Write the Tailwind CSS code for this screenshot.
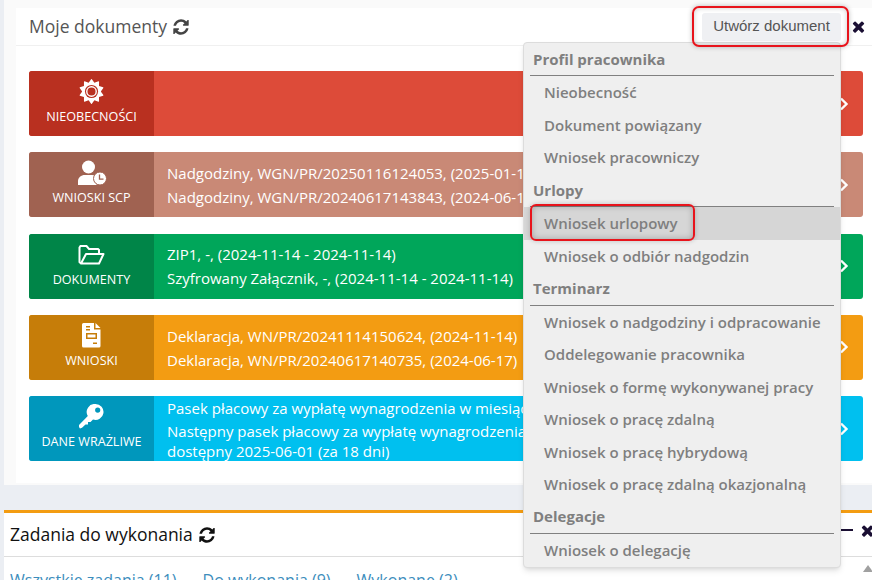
<!DOCTYPE html>
<html lang="pl">
<head>
    <meta charset="UTF-8">
    <title>Moje dokumenty</title>
    <script src="https://cdn.jsdelivr.net/npm/@tailwindcss/browser@4"></script>
</head>
<body class="relative w-[872px] h-[580px] overflow-hidden bg-[#ebeef3] font-['Open_Sans',sans-serif]">

    <!-- Moje dokumenty -->
    <div class="ml-1 h-[485px] pl-3 pt-2 bg-[#fafafa]">
        <div class="h-[475px] bg-white">
            <div class="h-[38px] flex items-center pl-[13px] pr-[5px] border-b border-[#f0f0f0]">
                <span class="text-[17.500px] text-[#555]">Moje dokumenty</span>
                <svg class="w-[18px] h-[18px] ml-[5px] text-[#444]" viewBox="0 0 1792 1792" fill="currentColor"><path d="M1639 1056q0 5-1 7-64 268-268 434.5t-478 166.5q-146 0-282.5-55t-243.5-157l-129 129q-19 19-45 19t-45-19-19-45v-448q0-26 19-45t45-19h448q26 0 45 19t19 45-19 45l-137 137q71 66 161 102t187 36q134 0 250-65t186-179q11-17 53-117 8-23 30-23h192q13 0 22.5 9.5t9.5 22.5zm25-800v448q0 26-19 45t-45 19h-448q-26 0-45-19t-19-45 19-45l138-138q-148-137-349-137-134 0-250 65t-186 179q-11 17-53 117-8 23-30 23h-199q-13 0-22.5-9.5t-9.5-22.5v-7q65-268 270-434.5t480-166.5q146 0 284 55.5t245 156.5l130-129q19-19 45-19t45 19 19 45z"/></svg>
                <button class="ml-auto mr-[9px] w-[139px] h-[28px] rounded-[3px] bg-[#eff0f3] text-[15px] text-[#555] font-['Liberation_Sans',sans-serif]">Utwórz dokument</button>
                <svg class="w-[17px] h-[17px] text-[#1a0f33]" viewBox="0 0 1792 1792" fill="currentColor"><path d="M1490 1322q0 40-28 68l-136 136q-28 28-68 28t-68-28l-294-294-294 294q-28 28-68 28t-68-28l-136-136q-28-28-28-68t28-68l294-294-294-294q-28-28-28-68t28-68l136-136q28-28 68-28t68 28l294 294 294-294q28-28 68-28t68 28l136 136q28 28 28 68t-28 68l-294 294 294 294q28 28 28 68z"/></svg>
            </div>

            <div class="pl-[13px] pr-[9px] pt-[25px] flex flex-col gap-[16.33px]">
                <!-- Nieobecności -->
                <div class="h-[65px] flex rounded-[3px] overflow-hidden bg-[#dd4b39] text-white">
                    <div class="w-[125px] shrink-0 bg-[#b93020] flex flex-col items-center pt-[8px]">
                        <svg class="w-[25px] h-[25px]" viewBox="0 0 1792 1792"><path fill="currentColor" d="M1748 1173q-4 15-20 20l-292 96v306q0 16-13 26-15 10-29 4l-292-94-180 248q-10 13-26 13t-26-13l-180-248-292 94q-14 6-29-4-13-10-13-26v-306l-292-96q-16-5-20-20-5-17 4-29l180-248-180-248q-9-13-4-29 4-15 20-20l292-96v-306q0-16 13-26 15-10 29-4l292 94 180-248q9-12 26-12t26 12l180 248 292-94q14-6 29 4 13 10 13 26v306l292 96q16 5 20 20 5 16-4 29l-180 248 180 248q9 12 4 29z"/><circle cx="896" cy="896" r="470" fill="#b93020"/><circle cx="896" cy="896" r="340" fill="none" stroke="#fff" stroke-width="100"/></svg>
                        <span class="mt-[4px] text-[12.600px] leading-[18px]">NIEOBECNOŚCI</span>
                    </div>
                    <div class="flex-1"></div>
                    <svg class="w-[10px] h-[14px] self-center mr-[14px]" viewBox="0 0 10 14" fill="none" stroke="currentColor" stroke-width="2.4"><path d="M2 1.500 7.500 7 2 12.500"/></svg>
                </div>

                <!-- Wnioski SCP -->
                <div class="h-[65px] flex rounded-[3px] overflow-hidden bg-[#c98976] text-white">
                    <div class="w-[125px] shrink-0 bg-[#a06251] flex flex-col items-center pt-[8px]">
                        <svg class="w-[30px] h-[25px] ml-[1px]" viewBox="0 0 30 25" fill="currentColor"><circle cx="11.500" cy="7" r="6.500"/><path d="M1 25v-3.500C1 17.500 4 15 8 15h7c1.500 0 2.800.3 4 1-1.200 2.500-1.200 6.500 1 9z"/><circle cx="23" cy="18.500" r="6.500" stroke="#a06251" stroke-width="1"/><path d="M22.500 14.500v4.700h4" fill="none" stroke="#a06251" stroke-width="1.300"/></svg>
                        <span class="mt-[4px] text-[12.600px] leading-[18px]">WNIOSKI SCP</span>
                    </div>
                    <div class="flex-1 min-w-0 pl-[13px] pt-[11px] text-[15px] leading-[20px] flex flex-col gap-1 whitespace-nowrap overflow-hidden">
                        <div>Nadgodziny, WGN/PR/20250116124053, (2025-01-16 - 2025-01-16)</div>
                        <div>Nadgodziny, WGN/PR/20240617143843, (2024-06-17 - 2024-06-17)</div>
                    </div>
                    <svg class="w-[10px] h-[14px] self-center mr-[14px] shrink-0" viewBox="0 0 10 14" fill="none" stroke="currentColor" stroke-width="2.4"><path d="M2 1.500 7.500 7 2 12.500"/></svg>
                </div>

                <!-- Dokumenty -->
                <div class="h-[65px] flex rounded-[3px] overflow-hidden bg-[#00a65a] text-white">
                    <div class="w-[125px] shrink-0 bg-[#008548] flex flex-col items-center pt-[8px]">
                        <svg class="w-[27px] h-[25px]" viewBox="0 0 27 25" fill="none" stroke="currentColor" stroke-width="2"><path d="M3 21.500 1.500 20V5.500l1-1.500h6l2.500 3h9l1 1v3.500"/><path d="M3 21.500 8 12h17.500l-4.500 9.500z" stroke-linejoin="round"/></svg>
                        <span class="mt-[4px] text-[12.600px] leading-[18px]">DOKUMENTY</span>
                    </div>
                    <div class="flex-1 min-w-0 pl-[13px] pt-[10px] text-[15px] leading-[20px] flex flex-col gap-1 whitespace-nowrap overflow-hidden">
                        <div>ZIP1, -, (2024-11-14 - 2024-11-14)</div>
                        <div>Szyfrowany Załącznik, -, (2024-11-14 - 2024-11-14)</div>
                    </div>
                    <svg class="w-[10px] h-[14px] self-center mr-[14px] shrink-0" viewBox="0 0 10 14" fill="none" stroke="currentColor" stroke-width="2.4"><path d="M2 1.500 7.500 7 2 12.500"/></svg>
                </div>

                <!-- Wnioski -->
                <div class="h-[65px] flex rounded-[3px] overflow-hidden bg-[#f39c12] text-white">
                    <div class="w-[125px] shrink-0 bg-[#c67d09] flex flex-col items-center pt-[8px]">
                        <svg class="w-[19px] h-[25px]" viewBox="0 0 19 25" fill="currentColor" fill-rule="evenodd"><path d="M1.500 0H12v6.500h6.500V23a1.500 1.500 0 0 1-1.500 1.500H1.500A1.500 1.500 0 0 1 0 23V1.500A1.500 1.500 0 0 1 1.500 0zM4 10v6h11v-6zm1.500 1.500h8v3h-8zM11 19.500v1.500h4v-1.500zM4 3v1.500h4V3zM4 6v1.500h4V6z"/><path d="M13.500 0v5h5z"/></svg>
                        <span class="mt-[4px] text-[12.600px] leading-[18px]">WNIOSKI</span>
                    </div>
                    <div class="flex-1 min-w-0 pl-[13px] pt-[11px] text-[15px] leading-[20px] flex flex-col gap-1 whitespace-nowrap overflow-hidden">
                        <div>Deklaracja, WN/PR/20241114150624, (2024-11-14)</div>
                        <div>Deklaracja, WN/PR/20240617140735, (2024-06-17)</div>
                    </div>
                    <svg class="w-[10px] h-[14px] self-center mr-[14px] shrink-0" viewBox="0 0 10 14" fill="none" stroke="currentColor" stroke-width="2.4"><path d="M2 1.500 7.500 7 2 12.500"/></svg>
                </div>

                <!-- Dane wrażliwe -->
                <div class="h-[65px] flex rounded-[3px] overflow-hidden bg-[#00c0ef] text-white">
                    <div class="w-[125px] shrink-0 bg-[#0097bc] flex flex-col items-center pt-[8px]">
                        <svg class="w-[25px] h-[25px]" viewBox="0 0 25 25" fill="currentColor" fill-rule="evenodd"><path d="M16.500 0a8 8 0 1 1-2.500 15.600L11.500 18H9v2.500H6.500L3 23.700 1 24.500 0 23v-2l8.800-9A8 8 0 0 1 16.500 0zm2.200 3.500a2.600 2.600 0 1 0 0 5.200 2.600 2.600 0 0 0 0-5.200z"/></svg>
                        <span class="mt-[4px] text-[12.600px] leading-[18px]">DANE WRAŻLIWE</span>
                    </div>
                    <div class="flex-1 min-w-0 pl-[13px] pt-[2px] text-[15px] leading-[20px] flex flex-col gap-[3px] whitespace-nowrap overflow-hidden">
                        <div>Pasek płacowy za wypłatę wynagrodzenia w miesiącu</div>
                        <div>Następny pasek płacowy za wypłatę wynagrodzenia<br>dostępny 2025-06-01 (za 18 dni)</div>
                    </div>
                    <svg class="w-[10px] h-[14px] self-center mr-[14px] shrink-0" viewBox="0 0 10 14" fill="none" stroke="currentColor" stroke-width="2.4"><path d="M2 1.500 7.500 7 2 12.500"/></svg>
                </div>
            </div>
        </div>
    </div>

    <!-- Zadania do wykonania -->
    <div class="ml-1 mt-[25px] h-[80px] bg-white border-t-[3px] border-[#f39c12]">
        <div class="h-[44px] flex items-center pl-[6px] border-b border-[#ddd]">
            <span class="text-[17.500px] text-[#111]">Zadania do wykonania</span>
            <svg class="w-[18px] h-[18px] ml-[5px] text-[#111]" viewBox="0 0 1792 1792" fill="currentColor"><path d="M1639 1056q0 5-1 7-64 268-268 434.5t-478 166.5q-146 0-282.5-55t-243.5-157l-129 129q-19 19-45 19t-45-19-19-45v-448q0-26 19-45t45-19h448q26 0 45 19t19 45-19 45l-137 137q71 66 161 102t187 36q134 0 250-65t186-179q11-17 53-117 8-23 30-23h192q13 0 22.5 9.5t9.5 22.5zm25-800v448q0 26-19 45t-45 19h-448q-26 0-45-19t-19-45 19-45l138-138q-148-137-349-137-134 0-250 65t-186 179q-11 17-53 117-8 23-30 23h-199q-13 0-22.5-9.5t-9.5-22.5v-7q65-268 270-434.5t480-166.5q146 0 284 55.5t245 156.5l130-129q19-19 45-19t45 19 19 45z"/></svg>
            <span class="ml-auto mb-[9px] w-[13px] h-[2px] bg-[#1a0f33]"></span>
            <svg class="w-[17px] h-[17px] ml-[6px] mr-[-4px] mb-[9px] text-[#1a0f33]" viewBox="0 0 1792 1792" fill="currentColor"><path d="M1490 1322q0 40-28 68l-136 136q-28 28-68 28t-68-28l-294-294-294 294q-28 28-68 28t-68-28l-136-136q-28-28-28-68t28-68l294-294-294-294q-28-28-28-68t28-68l136-136q28-28 68-28t68 28l294 294 294-294q28-28 68-28t68 28l136 136q28 28 28 68t-28 68l-294 294 294 294q28 28 28 68z"/></svg>
        </div>
        <div class="flex gap-[26px] pl-[6px] pt-[12px] text-[16px] leading-[22px] text-[#3c8dbc] whitespace-nowrap">
            <span>Wszystkie zadania (11)</span>
            <span>Do wykonania (9)</span>
            <span>Wykonane (2)</span>
        </div>
    </div>
    <div class="absolute left-[863px] top-[565px] w-0 h-0 border-x-[5px] border-x-transparent border-b-[7px] border-b-[#a0a0a0]"></div>

    <!-- Menu: Utwórz dokument -->
    <div class="absolute left-[523px] top-[42px] w-[318px] h-[526px] rounded-[4px] bg-[#efefef] border border-[#dcdcdc] shadow-md text-[15px] text-[#7f7f7f] font-semibold">
        <div class="mx-[6px] h-[33px] pl-[3px] flex items-end pb-[5px] font-bold border-b border-[#808080]">Profil pracownika</div>
        <div class="h-[32.500px] pl-[20px] flex items-center">Nieobecność</div>
        <div class="h-[32.500px] pl-[20px] flex items-center">Dokument powiązany</div>
        <div class="h-[32.500px] pl-[20px] flex items-center">Wniosek pracowniczy</div>
        <div class="mx-[6px] h-[33.500px] pl-[3px] flex items-end pb-[5px] font-bold border-b border-[#808080]">Urlopy</div>
        <div class="h-[33px] pl-[20px] flex items-center bg-[#d6d6d6]">Wniosek urlopowy</div>
        <div class="h-[32.500px] pl-[20px] flex items-center">Wniosek o odbiór nadgodzin</div>
        <div class="mx-[6px] h-[33px] pl-[3px] flex items-end pb-[5px] font-bold border-b border-[#808080]">Terminarz</div>
        <div class="h-[32.500px] pl-[20px] flex items-center">Wniosek o nadgodziny i odpracowanie</div>
        <div class="h-[32.500px] pl-[20px] flex items-center">Oddelegowanie pracownika</div>
        <div class="h-[32.500px] pl-[20px] flex items-center">Wniosek o formę wykonywanej pracy</div>
        <div class="h-[32.500px] pl-[20px] flex items-center">Wniosek o pracę zdalną</div>
        <div class="h-[32.500px] pl-[20px] flex items-center">Wniosek o pracę hybrydową</div>
        <div class="h-[32.500px] pl-[20px] flex items-center">Wniosek o pracę zdalną okazjonalną</div>
        <div class="mx-[6px] h-[33px] pl-[3px] flex items-end pb-[5px] font-bold border-b border-[#808080]">Delegacje</div>
        <div class="h-[32.500px] pl-[20px] flex items-center">Wniosek o delegację</div>
    </div>

    <!-- Czerwone obramowania -->
    <div class="absolute left-[692px] top-[6px] w-[157px] h-[41px] rounded-[7px] border-2 border-[#e8141c] shadow-[0_0_5px_rgba(0,0,0,0.25),inset_0_0_5px_rgba(0,0,0,0.2)]"></div>
    <div class="absolute left-[530px] top-[204px] w-[165px] h-[37px] rounded-[6px] border-2 border-[#e8141c] shadow-[0_0_5px_rgba(0,0,0,0.2),inset_0_0_6px_rgba(0,0,0,0.25)]"></div>

</body>
</html>
